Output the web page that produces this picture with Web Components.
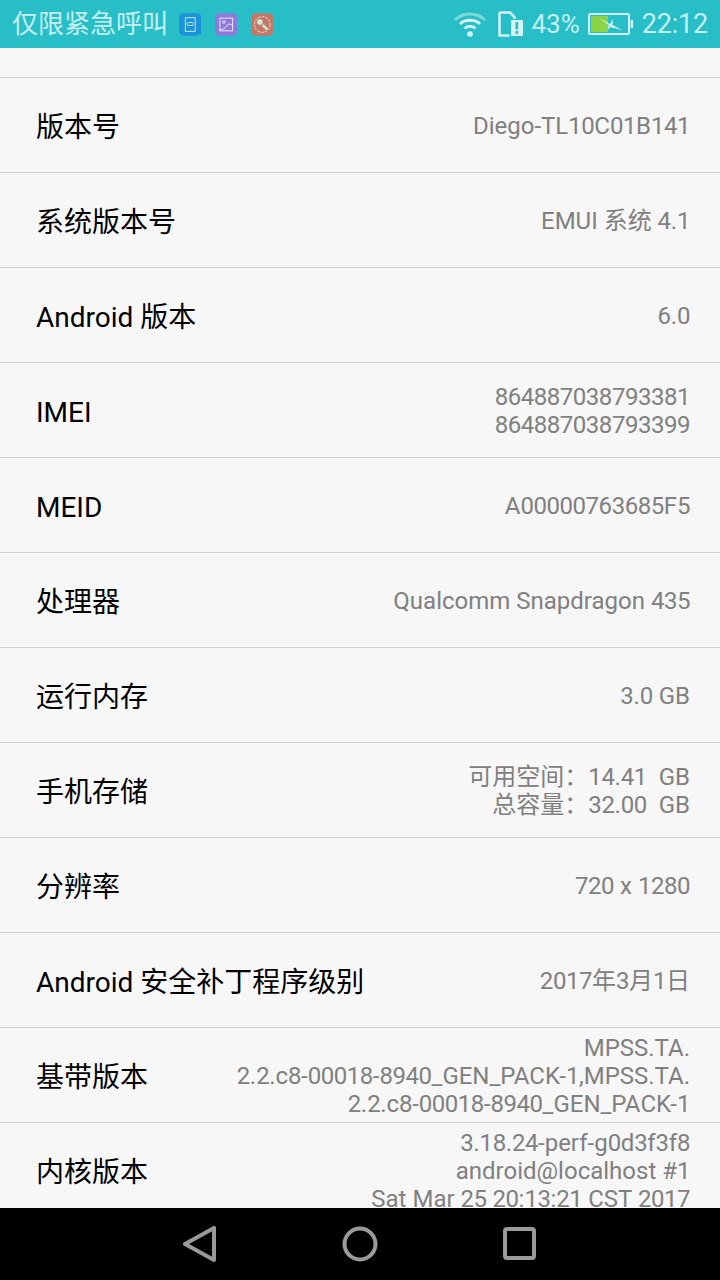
<!DOCTYPE html>
<html lang="zh-CN">
<head>
<meta charset="utf-8">
<title>关于手机</title>
<style>
  html, body { margin: 0; padding: 0; }
  body { font-family: Roboto, "Noto Sans CJK SC", sans-serif; background: #f7f7f7; }
  /* the phone's Roboto has slightly narrower digits */
  .num { letter-spacing: -0.47px; }
</style>
</head>
<body>

<phone-screen>
  <status-bar slot="top"></status-bar>
  <info-row label="版本号">Diego-TL10C01B141</info-row>
  <info-row label="系统版本号">EMUI 系统 4.1</info-row>
  <info-row label="Android 版本">6.0</info-row>
  <info-row label="IMEI">864887038793381<br>864887038793399</info-row>
  <info-row label="MEID">A00000763685F5</info-row>
  <info-row label="处理器">Qualcomm Snapdragon 435</info-row>
  <info-row label="运行内存">3.0 GB</info-row>
  <info-row label="手机存储">可用空间：14.41&nbsp; GB<br>总容量：32.00&nbsp; GB</info-row>
  <info-row label="分辨率">720 x 1280</info-row>
  <info-row label="Android 安全补丁程序级别">2017年3月1日</info-row>
  <info-row label="基带版本">MPSS.TA.<br>2.2.c8-00018-8940_GEN_PACK-1,MPSS.TA.<br>2.2.c8-00018-8940_GEN_PACK-1</info-row>
  <info-row label="内核版本">3.18.24-perf-g0d3f3f8<br>android@localhost #1<br>Sat Mar 25 20:13:21 CST 2017</info-row>
  <nav-bar slot="bottom"></nav-bar>
</phone-screen>

<script>
class PhoneScreen extends HTMLElement {
  constructor() {
    super();
    this.attachShadow({ mode: 'open' });
    this.shadowRoot.innerHTML = `
      <style>
        :host { display: flex; flex-direction: column; width: 720px; height: 1280px; overflow: hidden; background: #f7f7f7; }
        #list { flex: 1; min-height: 0; overflow: hidden; padding-top: 29px; }
      </style>
      <slot name="top"></slot>
      <div id="list"><slot></slot></div>
      <slot name="bottom"></slot>
    `;
  }
}

class StatusBar extends HTMLElement {
  constructor() {
    super();
    this.attachShadow({ mode: 'open' });
    this.shadowRoot.innerHTML = `
      <style>
        :host { display: flex; align-items: center; height: 48px; padding: 0 12px; box-sizing: border-box; background: #27bec8; color: #c4f0f1; }
        #carrier { font-size: 26px; line-height: 48px; white-space: nowrap; }
        #apps { display: flex; gap: 13.500px; margin-left: 10.500px; }
        .app { display: block; width: 22.500px; height: 23px; }
        #right { display: flex; align-items: center; margin-left: auto; }
        #percent { font-size: 26px; line-height: 48px; margin-left: 8px; }
        #time { font-size: 27px; line-height: 48px; margin-left: 8px; letter-spacing: -0.2px; }
        svg { display: block; }
      </style>
      <div id="carrier">仅限紧急呼叫</div>
      <div id="apps">
        <svg class="app" viewBox="0 0 23 23">
          <rect width="23" height="23" rx="5" fill="#1b92d9"/>
          <rect x="6.500" y="4.500" width="10" height="14" fill="none" stroke="#c8ecf5" stroke-width="1"/>
          <rect x="8.500" y="9.500" width="6" height="3" rx="1" fill="none" stroke="#c8ecf5" stroke-width="1"/>
        </svg>
        <svg class="app" viewBox="0 0 23 23">
          <rect width="23" height="23" rx="5" fill="#8e79dc"/>
          <rect x="5" y="5" width="13" height="13" fill="none" stroke="#ece8fb" stroke-width="1"/>
          <circle cx="9" cy="9" r="1.300" fill="none" stroke="#ece8fb" stroke-width="1"/>
          <path d="M5 17 C9 16.500 12 14 13 11.500 C14 10.500 16 11 18 12.500" fill="none" stroke="#ece8fb" stroke-width="1"/>
        </svg>
        <svg class="app" viewBox="0 0 23 23">
          <rect width="23" height="23" rx="5" fill="#c47868"/>
          <circle cx="11.500" cy="11.500" r="8" fill="none" stroke="#f3e4dc" stroke-width="1" stroke-dasharray="2.500 1.200"/>
          <path d="M10 10 L16 16" stroke="#cfe8d6" stroke-width="2.600" stroke-linecap="round"/>
          <circle cx="9" cy="9" r="2.800" fill="#cfe8d6"/>
          <path d="M17 6 L6 17" stroke="#c47868" stroke-width="1.200"/>
        </svg>
      </div>
      <div id="right">
        <svg width="34" height="26" viewBox="0 0 34 26">
          <path d="M2 9 C10 1 24 1 32 9" fill="none" stroke="#7fd8dc" stroke-width="3"/>
          <path d="M7 13 C12 8 22 8 27 13" fill="none" stroke="#d4f3f4" stroke-width="3"/>
          <path d="M11.500 17.500 C14.500 14.500 19.500 14.500 22.500 17.500" fill="none" stroke="#d4f3f4" stroke-width="3"/>
          <circle cx="17" cy="23" r="2.800" fill="#d4f3f4"/>
        </svg>
        <svg style="margin-left:11px" width="25" height="26" viewBox="0 0 25 26">
          <path d="M1.500 1.500 H12 L16.500 6 V8 M11.500 24.500 H1.500 V1.500" fill="none" stroke="#d4f3f4" stroke-width="2.500"/>
          <rect x="13" y="9" width="12" height="16" rx="1" fill="#d4f3f4"/>
          <rect x="17.500" y="11" width="2.600" height="7.500" fill="#27bec8"/>
          <rect x="17.500" y="20" width="2.600" height="2.800" fill="#27bec8"/>
        </svg>
        <div id="percent">43%</div>
        <svg style="margin-left:8px" width="46" height="22" viewBox="0 0 46 22">
          <rect x="1" y="1" width="40" height="20" rx="1.500" fill="none" stroke="#d4f3f4" stroke-width="2"/>
          <rect x="3" y="3" width="17" height="16" fill="#8cd447"/>
          <rect x="42.500" y="7" width="2.500" height="8" fill="#d4f3f4"/>
          <path d="M11 5 L22 11 L25 6 L24.500 12 L34 17 L22 14 L20 17 L20.500 12 Z" fill="#d4f3f4"/>
        </svg>
        <div id="time">22:12</div>
      </div>
    `;
  }
}

class InfoRow extends HTMLElement {
  constructor() {
    super();
    this.attachShadow({ mode: 'open' });
    this.shadowRoot.innerHTML = `
      <style>
        :host { display: flex; align-items: center; justify-content: space-between; box-sizing: border-box; height: 95px; padding: 0 30px 0 36px; border-top: 1px solid #d2d2d2; }
        #label { font-size: 28px; line-height: 40px; padding-top: 5px; color: #000; white-space: nowrap; }
        #value { font-size: 24px; line-height: 28px; padding-top: 2px; color: #808080; text-align: right; white-space: nowrap; }
      </style>
      <div id="label"></div>
      <div id="value"><slot></slot></div>
    `;
  }
  connectedCallback() {
    this.shadowRoot.getElementById('label').textContent = this.getAttribute('label');
    // Wrap runs of digits so they can be tightened from the page's style
    [...this.childNodes].filter(it => it.nodeType === 3).forEach(node => {
      const box = document.createElement('span');
      box.innerHTML = node.textContent.replace(/\d+/g, '<span class="num">$&</span>');
      node.replaceWith(box);
    });
  }
}

class NavBar extends HTMLElement {
  constructor() {
    super();
    this.attachShadow({ mode: 'open' });
    this.shadowRoot.innerHTML = `
      <style>
        :host { display: flex; justify-content: center; align-items: center; gap: 124px; flex: none; height: 72px; background: #000; }
        svg { display: block; width: 36px; height: 36px; fill: none; stroke: #9a9a9a; stroke-width: 4; stroke-linejoin: round; }
      </style>
      <svg viewBox="0 0 36 36"><path d="M32 2 V34 L3 18 Z"/></svg>
      <svg viewBox="0 0 36 36"><circle cx="18" cy="18" r="15.500"/></svg>
      <svg viewBox="0 0 36 36"><rect x="3" y="3" width="29" height="29" rx="2"/></svg>
    `;
  }
}

customElements.define('phone-screen', PhoneScreen);
customElements.define('status-bar', StatusBar);
customElements.define('info-row', InfoRow);
customElements.define('nav-bar', NavBar);
</script>
</body>
</html>
